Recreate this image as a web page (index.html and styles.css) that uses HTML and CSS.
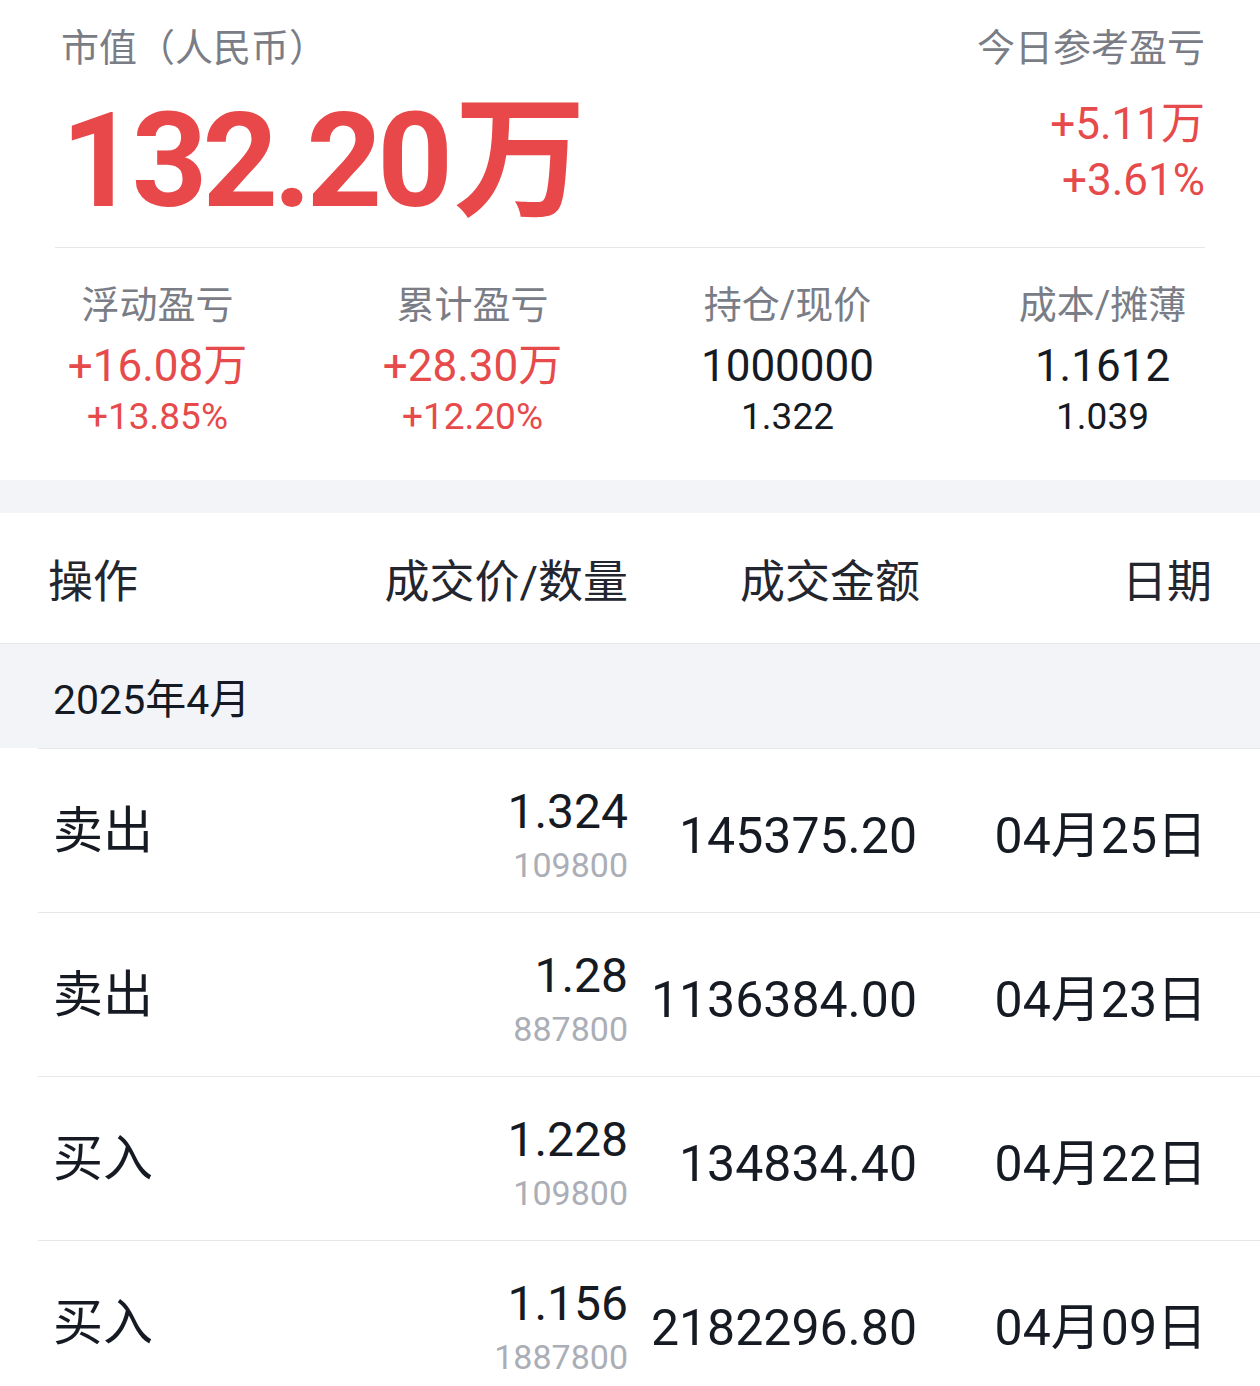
FILE: index.html
```html
<!DOCTYPE html>
<html lang="zh-CN">
<head>
  <meta charset="UTF-8" />
  <meta name="viewport" content="width=device-width, initial-scale=1.0" />
  <title>持仓详情</title>
  <link rel="stylesheet" href="styles.css">
</head>
<body>
  <section class="summary">
    <div class="summary-main">
      <div class="label">市值（人民币）</div>
      <div class="market-value"><span class="digits">132.20</span>万</div>
    </div>
    <div class="summary-today">
      <div class="label">今日参考盈亏</div>
      <div class="today-amount up">+5.11万</div>
      <div class="today-rate up">+3.61%</div>
    </div>
  </section>

  <section class="stats">
    <div class="stat">
      <div class="stat-label">浮动盈亏</div>
      <div class="stat-value up">+16.08万</div>
      <div class="stat-sub up">+13.85%</div>
    </div>
    <div class="stat">
      <div class="stat-label">累计盈亏</div>
      <div class="stat-value up">+28.30万</div>
      <div class="stat-sub up">+12.20%</div>
    </div>
    <div class="stat">
      <div class="stat-label">持仓/现价</div>
      <div class="stat-value">1000000</div>
      <div class="stat-sub">1.322</div>
    </div>
    <div class="stat">
      <div class="stat-label">成本/摊薄</div>
      <div class="stat-value">1.1612</div>
      <div class="stat-sub">1.039</div>
    </div>
  </section>

  <div class="gap"></div>

  <div class="table-head">
    <div>操作</div>
    <div class="right">成交价/数量</div>
    <div class="right">成交金额</div>
    <div class="right">日期</div>
  </div>

  <div class="month">2025年4月</div>

  <div class="trades">
    <div class="trade">
      <div class="op">卖出</div>
      <div class="price-cell">
        <div class="price">1.324</div>
        <div class="qty">109800</div>
      </div>
      <div class="amount">145375.20</div>
      <div class="date">04月25日</div>
    </div>
    <div class="trade">
      <div class="op">卖出</div>
      <div class="price-cell">
        <div class="price">1.28</div>
        <div class="qty">887800</div>
      </div>
      <div class="amount">1136384.00</div>
      <div class="date">04月23日</div>
    </div>
    <div class="trade">
      <div class="op">买入</div>
      <div class="price-cell">
        <div class="price">1.228</div>
        <div class="qty">109800</div>
      </div>
      <div class="amount">134834.40</div>
      <div class="date">04月22日</div>
    </div>
    <div class="trade">
      <div class="op">买入</div>
      <div class="price-cell">
        <div class="price">1.156</div>
        <div class="qty">1887800</div>
      </div>
      <div class="amount">2182296.80</div>
      <div class="date">04月09日</div>
    </div>
  </div>
</body>
</html>
```

FILE: styles.css
```css
* {
  box-sizing: border-box;
}
body {
  margin: 0;
  background-color: #fff;
  font-family: Roboto, "Noto Sans CJK SC", sans-serif;
  color: #161a23;
}
.up {
  color: #e64a4b;
}

/* top summary */
.summary {
  display: flex;
  justify-content: space-between;
  margin: 0 55px;
  padding-top: 26px;
  border-bottom: 1px solid #e6e7ea;
}
.summary-main {
  padding-left: 6px;
}
.label {
  font-size: 38px;
  line-height: 44px;
  color: #7a7d86;
}
.market-value {
  margin-top: 16px;
  font-size: 132px;
  line-height: 150px;
  font-weight: 700;
  color: #e8484a;
  padding-bottom: 11px;
}
.market-value .digits {
  letter-spacing: -5px;
  margin-right: 6px;
}
.summary-today {
  text-align: right;
}
.today-amount,
.today-rate {
  font-size: 44px;
  line-height: 56px;
}
.today-amount {
  margin-top: 26px;
}

/* stats */
.stats {
  display: grid;
  grid-template-columns: repeat(4, 1fr);
  padding: 34px 0 41px;
  text-align: center;
}
.stat-label {
  font-size: 38px;
  line-height: 46px;
  color: #7a7d86;
}
.stat-value {
  margin-top: 12px;
  font-size: 44px;
  line-height: 52px;
}
.stat-sub {
  margin-top: 3px;
  font-size: 37px;
  line-height: 44px;
}
.gap {
  height: 33px;
  background-color: #f3f4f8;
}

/* trade table */
.table-head {
  display: grid;
  grid-template-columns: 1fr 250px 292px 292px;
  align-items: center;
  height: 131px;
  padding: 0 48px;
  border-bottom: 1px solid #e6e7ea;
  font-size: 45px;
  color: #23262e;
}
.right {
  text-align: right;
}
.month {
  display: flex;
  align-items: center;
  height: 104px;
  padding-left: 53px;
  background-color: #f3f4f8;
  font-size: 41px;
}
.trades {
  margin-left: 38px;
}
.trade {
  display: grid;
  grid-template-columns: 1fr 250px 289px 290px;
  align-items: center;
  height: 164px;
  padding: 10px 53px 0 15px;
  border-top: 1px solid #e6e7ea;
}
.op {
  margin-bottom: 10px;
  font-size: 50px;
  line-height: 56px;
}
.price-cell {
  text-align: right;
}
.price {
  font-size: 48px;
  line-height: 50px;
}
.qty {
  margin-top: 8px;
  font-size: 34px;
  line-height: 40px;
  color: #abaeb6;
}
.amount,
.date {
  text-align: right;
  font-size: 50px;
  line-height: 56px;
}
```
